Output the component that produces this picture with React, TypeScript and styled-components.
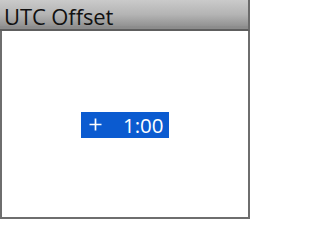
import React from "react";
import styled, { createGlobalStyle } from "styled-components";

const Global = createGlobalStyle`
  html, body { margin: 0; padding: 0; background: #ffffff; }
  body { width: 250px; height: 219px; overflow: hidden; }
`;

const Screen = styled.div`
  width: 250px;
  height: 219px;
  box-sizing: border-box;
  display: flex;
  flex-direction: column;
  background: #ffffff;
  font-family: "Open Sans", "Noto Sans", sans-serif;
`;

const TitleBar = styled.div`
  height: 31px;
  box-sizing: border-box;
  flex: none;
  display: flex;
  align-items: flex-start;
  padding: 1px 0 0 4px;
  background: linear-gradient(#cacaca 0%, #b4b4b4 50%, #949494 88%, #8c8c8c 92%);
  border-bottom: 2px solid #5e5e5e;
  border-right: 2px solid #6a6a6a;
`;

const Title = styled.div`
  font-size: 22px;
  line-height: 30px;
  color: #111111;
  letter-spacing: -0.1px;
`;

const Body = styled.div`
  flex: 1;
  display: flex;
  align-items: center;
  justify-content: center;
  border-left: 2px solid #6e6e6e;
  border-right: 2px solid #6e6e6e;
  border-bottom: 2px solid #6e6e6e;
  padding-right: 1px;
`;

const ValueBox = styled.div`
  width: 88px;
  height: 26px;
  box-sizing: border-box;
  display: flex;
  align-items: center;
  padding: 0 5px 0 8px;
  background: #0b5bd0;
  color: #ffffff;
  font-size: 20.5px;
  margin-top: 1px;
`;

const Sign = styled.svg`
  width: 13px;
  height: 13px;
  display: block;
  flex: none;
`;

const Time = styled.span`
  margin-left: auto;
  line-height: 26px;
`;

export default function App() {
  return (
    <>
      <Global />
      <Screen>
        <TitleBar>
          <Title>UTC Offset</Title>
        </TitleBar>
        <Body>
          <ValueBox>
            <Sign viewBox="0 0 13 13">
              <path d="M6.5 0.5V12.5M0.5 6.5H12.5" stroke="#ffffff" strokeWidth="1.7" fill="none" />
            </Sign>
            <Time>1:00</Time>
          </ValueBox>
        </Body>
      </Screen>
    </>
  );
}
